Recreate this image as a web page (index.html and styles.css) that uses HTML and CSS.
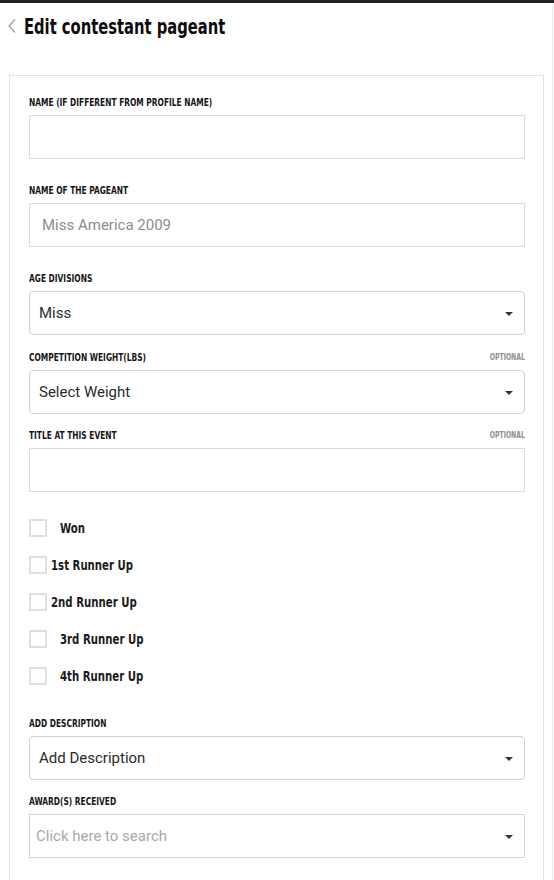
FILE: index.html
```html
<!DOCTYPE html>
<html lang="en">
<head>
<meta charset="utf-8">
<title>Edit contestant pageant</title>
<link rel="stylesheet" href="styles.css">
</head>
<body>
<div class="topbar"></div>
<div class="page">
  <header class="header">
    <svg class="back" width="10" height="16" viewBox="0 0 10 16"><polyline points="8,1.5 2,8 8,14.5" fill="none" stroke="#9a9a9a" stroke-width="1.2"/></svg>
    <h1 class="title">Edit contestant pageant</h1>
  </header>
  <section class="card">
    <div class="field field-wide">
      <div class="label-row"><span class="label">NAME (IF DIFFERENT FROM PROFILE NAME)</span></div>
      <div class="input"></div>
    </div>
    <div class="field field-wide">
      <div class="label-row"><span class="label">NAME OF THE PAGEANT</span></div>
      <div class="input"><span class="value muted">Miss America 2009</span></div>
    </div>
    <div class="field">
      <div class="label-row"><span class="label">AGE DIVISIONS</span></div>
      <div class="select"><span class="value">Miss</span><span class="caret"></span></div>
    </div>
    <div class="field field-tight">
      <div class="label-row"><span class="label">COMPETITION WEIGHT(LBS)</span><span class="optional">OPTIONAL</span></div>
      <div class="select"><span class="value">Select Weight</span><span class="caret"></span></div>
    </div>
    <div class="field">
      <div class="label-row"><span class="label">TITLE AT THIS EVENT</span><span class="optional">OPTIONAL</span></div>
      <div class="input"></div>
    </div>
    <ul class="checks">
      <li class="check"><span class="box"></span><span class="check-label indent">Won</span></li>
      <li class="check"><span class="box"></span><span class="check-label">1st Runner Up</span></li>
      <li class="check"><span class="box"></span><span class="check-label">2nd Runner Up</span></li>
      <li class="check"><span class="box"></span><span class="check-label indent">3rd Runner Up</span></li>
      <li class="check"><span class="box"></span><span class="check-label indent">4th Runner Up</span></li>
    </ul>
    <div class="field field-tight">
      <div class="label-row"><span class="label">ADD DESCRIPTION</span></div>
      <div class="select"><span class="value">Add Description</span><span class="caret"></span></div>
    </div>
    <div class="field">
      <div class="label-row"><span class="label">AWARD(S) RECEIVED</span></div>
      <div class="input search"><span class="value placeholder">Click here to search</span><span class="caret"></span></div>
    </div>
  </section>
</div>
</body>
</html>
```
FILE: styles.css
```css
* { box-sizing: border-box; }
html, body { margin: 0; padding: 0; background: #fff; }
body {
  width: 554px;
  height: 880px;
  overflow: hidden;
  font-family: "DejaVu Sans Condensed", "DejaVu Sans", sans-serif;
  font-stretch: condensed;
  color: #111;
}
.topbar { height: 3px; background: #232323; }
.page {
  width: 553px;
  height: 877px;
  border-right: 1px solid #ececec;
  overflow: hidden;
}
.header {
  display: flex;
  align-items: center;
  height: 50px;
  padding-left: 7px;
  padding-bottom: 2px;
}
.back { display: block; margin-right: 7px; margin-top: -2px; flex: none; }
.title {
  margin: 0;
  font-size: 21px;
  font-weight: 700;
  color: #0c0c0c;
  white-space: nowrap;
  transform: scaleX(0.78);
  transform-origin: left center;
}
.card {
  margin-top: 22px;
  margin-left: 9px;
  width: 535px;
  height: 820px;
  border: 1px solid #e2e2e2;
  border-bottom: none;
  padding: 19px 18px 0 19px;
}
.field { margin-bottom: 15px; }
.field-wide { margin-bottom: 24px; }
.field-tight { margin-bottom: 14px; }
.label-row {
  display: flex;
  justify-content: space-between;
  align-items: center;
  height: 14px;
  margin-bottom: 6px;
}
.label {
  display: inline-block;
  font-size: 10px;
  font-weight: 700;
  color: #151515;
  white-space: nowrap;
  transform: scaleX(0.83);
  transform-origin: left center;
}
.optional {
  display: inline-block;
  font-size: 8.5px;
  font-weight: 700;
  color: #8e8e8e;
  white-space: nowrap;
  transform: scaleX(0.8);
  transform-origin: right center;
}
.input, .select {
  height: 44px;
  border: 1px solid #dcdcdc;
  display: flex;
  align-items: center;
  justify-content: space-between;
  font-family: Roboto, "Liberation Sans", sans-serif;
  font-stretch: normal;
  font-size: 15px;
}
.input { padding: 0 12px; }
.select {
  border-color: #cfcfcf;
  border-radius: 4px;
  padding: 0 11px 0 9px;
}
.input.search { padding: 0 11px 0 6px; border-color: #d6d6d6; }
.value { color: #2b2b2b; }
.value.muted { color: #8c8c8c; }
.value.placeholder { color: #a8a8a8; }
.caret {
  width: 0;
  height: 0;
  border-left: 4px solid transparent;
  border-right: 4px solid transparent;
  border-top: 4.5px solid #333;
  margin-top: 1px;
}
.checks {
  list-style: none;
  margin: 17px 0 22px 0;
  padding: 0;
}
.check {
  display: flex;
  align-items: center;
  height: 37px;
}
.box {
  width: 18px;
  height: 18px;
  border: 2px solid #dedede;
  flex: none;
}
.check-label {
  display: inline-block;
  margin-left: 4px;
  font-size: 14.5px;
  font-weight: 700;
  color: #1a1a1a;
  white-space: nowrap;
  transform: scaleX(0.78);
  transform-origin: left center;
}
.check-label.indent { margin-left: 13px; }
```
